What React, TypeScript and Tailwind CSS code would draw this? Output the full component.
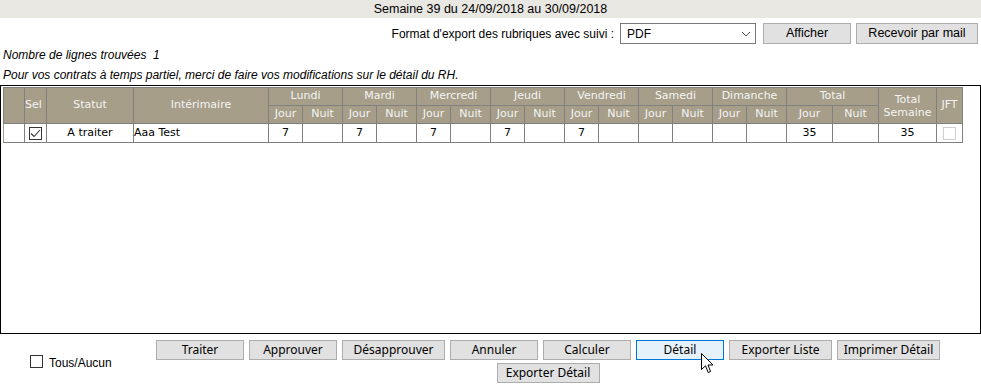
import React from "react";

const days = ["Lundi", "Mardi", "Mercredi", "Jeudi", "Vendredi", "Samedi", "Dimanche"];

function Btn({ label, w, active }: { label: string; w: string; active?: boolean }) {
  return (
    <div
      className={`relative flex h-[20px] items-center justify-center border text-[12px] text-black ${w} ${
        active ? "border-[#0078d7] bg-[#e5f1fb]" : "border-[#adadad] bg-[#e1e1e1]"
      }`}
      style={{ fontFamily: '"Noto Sans", "Liberation Sans", sans-serif' }}
    >
      {label}
    </div>
  );
}

export default function App() {
  const th = "border border-[#808080] text-[#f4f4f4] font-normal p-0 text-center";
  const td = "border border-[#808080] p-0 text-center h-[19px]";
  return (
    <div className="w-[981px] bg-white text-black" style={{ fontFamily: '"Liberation Sans", Arial, sans-serif' }}>
      <div className="h-[18px] bg-[#e9e7e2] text-center text-[12.5px] leading-[19px]">
        Semaine 39 du 24/09/2018 au 30/09/2018
      </div>
      <div className="mt-[5px] flex h-[21px] items-center justify-end pr-[3px]">
        <span className="mr-[6px] text-[12px]">Format d'export des rubriques avec suivi :</span>
        <div className="flex h-[21px] w-[136px] items-center justify-between border border-[#7a7a7a] bg-white pl-[6px] pr-[3px] text-[12px]">
          <span>PDF</span>
          <svg width="10" height="6" viewBox="0 0 10 6" className="mr-[1px]">
            <path d="M1 1 L5 5 L9 1" fill="none" stroke="#555" strokeWidth="1" />
          </svg>
        </div>
        <div className="ml-[7px] flex h-[21px] w-[88px] items-center justify-center border border-[#adadad] bg-[#e1e1e1] text-[12.5px]">
          Afficher
        </div>
        <div className="ml-[5px] flex h-[21px] w-[122px] items-center justify-center border border-[#adadad] bg-[#e1e1e1] text-[12.5px]">
          Recevoir par mail
        </div>
      </div>
      <div className="mt-[1px] px-[3px] text-[12px] italic leading-[20px]">
        <div>Nombre de lignes trouvées&nbsp; 1</div>
        <div>Pour vos contrats à temps partiel, merci de faire vos modifications sur le détail du RH.</div>
      </div>
      <div className="h-[249px] border border-black pl-[2px] pt-[1px]">
        <table
          className="border-collapse text-[11px]"
          style={{ fontFamily: '"DejaVu Sans", Verdana, sans-serif', tableLayout: "fixed" }}
        >
          <colgroup>
            <col className="w-[21px]" />
            <col className="w-[22px]" />
            <col className="w-[87px]" />
            <col className="w-[135px]" />
            {days.map((d) => (
              <React.Fragment key={d}>
                <col className="w-[34px]" />
                <col className="w-[40px]" />
              </React.Fragment>
            ))}
            <col className="w-[46px]" />
            <col className="w-[46px]" />
            <col className="w-[58px]" />
            <col className="w-[26px]" />
          </colgroup>
          <thead className="bg-[#a69e89]">
            <tr className="h-[18px]">
              <th rowSpan={2} className={th}></th>
              <th rowSpan={2} className={`${th} text-left`}>Sel</th>
              <th rowSpan={2} className={th}>Statut</th>
              <th rowSpan={2} className={th}>Intérimaire</th>
              {days.map((d) => (
                <th key={d} colSpan={2} className={th}>
                  {d}
                </th>
              ))}
              <th colSpan={2} className={th}>Total</th>
              <th rowSpan={2} className={`${th} leading-[13px]`}>
                Total
                <br />
                Semaine
              </th>
              <th rowSpan={2} className={th}>JFT</th>
            </tr>
            <tr className="h-[18px]">
              {[...days, "Total"].map((d) => (
                <React.Fragment key={d}>
                  <th className={th}>Jour</th>
                  <th className={th}>Nuit</th>
                </React.Fragment>
              ))}
            </tr>
          </thead>
          <tbody>
            <tr>
              <td className={`${td} border-l-[#a69e89]`}></td>
              <td className={td}>
                <div className="mx-auto flex h-[13px] w-[13px] items-center justify-center border border-[#333] bg-white">
                  <svg width="11" height="9" viewBox="0 0 11 9">
                    <path d="M1 4.5 L4 7.5 L10 1" fill="none" stroke="#333" strokeWidth="1.1" />
                  </svg>
                </div>
              </td>
              <td className={td}>A traiter</td>
              <td className={`${td} text-left`}>Aaa Test</td>
              {days.map((d, i) => (
                <React.Fragment key={d}>
                  <td className={td}>{i < 5 ? "7" : ""}</td>
                  <td className={td}></td>
                </React.Fragment>
              ))}
              <td className={td}>35</td>
              <td className={td}></td>
              <td className={td}>35</td>
              <td className={td}>
                <div className="mx-auto h-[13px] w-[13px] border border-[#cfcfcf] bg-white" />
              </td>
            </tr>
          </tbody>
        </table>
      </div>
      <div className="mt-[6px] flex">
        <div className="flex w-[115px] items-center pl-[30px] text-[12px]">
          <div className="mr-[6px] h-[13px] w-[13px] border border-[#333] bg-white" />
          <span className="mt-[2px]">Tous/Aucun</span>
        </div>
        <div className="relative flex flex-1 flex-wrap justify-center gap-x-[5px] gap-y-[3px]">
          <Btn label="Traiter" w="w-[88px]" />
          <Btn label="Approuver" w="w-[88px]" />
          <Btn label="Désapprouver" w="w-[103px]" />
          <Btn label="Annuler" w="w-[88px]" />
          <Btn label="Calculer" w="w-[88px]" />
          <Btn label="Détail" w="w-[88px]" active />
          <Btn label="Exporter Liste" w="w-[103px]" />
          <Btn label="Imprimer Détail" w="w-[103px]" />
          <Btn label="Exporter Détail" w="w-[103px]" />
          <svg
            className="absolute left-[586px] top-[13px]"
            width="13"
            height="21"
            viewBox="0 0 13 21"
          >
            <path
              d="M0.5 0.5 L0.5 16.5 L4.5 12.8 L7.2 19.5 L9.6 18.5 L7 12 L12 12 Z"
              fill="white"
              stroke="black"
              strokeWidth="1"
              strokeLinejoin="miter"
            />
          </svg>
        </div>
      </div>
    </div>
  );
}
